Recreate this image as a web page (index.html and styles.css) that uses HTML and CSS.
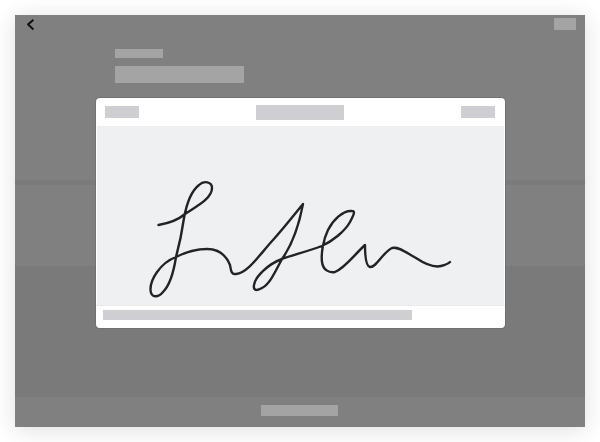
FILE: index.html
```html
<!DOCTYPE html>
<html lang="en">
<head>
<meta charset="utf-8">
<title>Signature preview</title>
<link rel="stylesheet" href="styles.css">
</head>
<body>
<main class="screen">
  <section class="top">
    <div class="nav">
      <svg class="back" width="8" height="12" viewBox="0 0 8 12"><path d="M6.4 0.8 L1.1 5.4 L6.4 10.4" fill="none" stroke="#111" stroke-width="2"/></svg>
      <span class="ph nav-action"></span>
    </div>
    <div class="heading">
      <span class="ph label"></span>
      <span class="ph title"></span>
    </div>
  </section>
  <div class="divider"></div>
  <section class="mid"></section>
  <section class="lower"></section>
  <footer class="bottom"><span class="ph bottom-action"></span></footer>

  <div class="modal">
    <div class="modal-head">
      <span class="mh side"></span>
      <span class="mh center"></span>
      <span class="mh side"></span>
    </div>
    <div class="modal-body">
      <svg class="signature" width="407" height="179" viewBox="97 126 407 179">
        <path d="M158.5 225 C170 223 178 220 185 214 C195 207 212 199 212 188 C212 182 204 180 199 185 C190 192 186 207 184 218 C182 232 179 246 176 257 C174 270 170 285 163 292 C158 298 151 298 150.5 290 C150 280 160 263 176 257 C186 252 198 249 207 249 C218 249 226 255 230 265 C231 270 231 275 236 274 C248 273 260 254 273 240 C283 229 294 215 303 204 C299 225 292 245 282 259 C275 272 270 284 262 288 C257 291 253 291 254 285 C255 277 268 264 282 259 C292 255 306 252 321.7 246 C333 241 345 231 350 222 C353 216 356 211 352 211 C343 210 333 220 328 230 C323 240 321 254 322 262 C323 270 329 273 335 272 C345 268 355 254 365 245 C365 252 365 266 370 267 C376 268 383 252 392 248 C399 246 408 254 416 258 C425 264 433 268 441 266 C445 265 448 264 450 262" fill="none" stroke="#222327" stroke-width="2.4" stroke-linecap="round" stroke-linejoin="round"/>
      </svg>
    </div>
    <div class="modal-foot"><span class="mh foot-bar"></span></div>
  </div>
</main>
</body>
</html>
```

FILE: styles.css
```css
html, body {
  margin: 0;
  padding: 0;
  background: #fff;
  overflow: hidden;
}
body {
  width: 600px;
  height: 442px;
  padding: 15px 15px 0;
  box-sizing: border-box;
}
.screen {
  position: relative;
  width: 570px;
  height: 412px;
  display: flex;
  flex-direction: column;
  background: #7a7a7b;
  box-shadow: 0 3px 22px rgba(0, 0, 0, 0.13);
}
.top {
  height: 165px;
  background: #808080;
  box-sizing: border-box;
  padding: 3px 9px 0 12px;
}
.nav {
  display: flex;
  justify-content: space-between;
  align-items: flex-start;
}
.back {
  margin-top: 1px;
  display: block;
}
.ph {
  display: block;
  background: #a4a4a4;
}
.nav-action {
  width: 22px;
  height: 12px;
}
.heading {
  display: flex;
  flex-direction: column;
  gap: 8px;
  margin: 18px 0 0 88px;
}
.label {
  width: 48px;
  height: 9px;
}
.title {
  width: 129px;
  height: 17px;
}
.divider {
  height: 5px;
  background: #7a7a7a;
}
.mid {
  height: 81px;
  background: #808080;
}
.lower {
  height: 131px;
  background: #7a7a7b;
}
.bottom {
  height: 30px;
  background: #808080;
  display: flex;
  justify-content: center;
  padding-top: 8px;
  padding-right: 1px;
  box-sizing: border-box;
}
.bottom-action {
  width: 77px;
  height: 11px;
}
.modal {
  position: absolute;
  left: 81px;
  top: 83px;
  width: 409px;
  height: 230px;
  display: flex;
  flex-direction: column;
  background: #fff;
  border-radius: 4px;
  box-shadow: 0 0 0 1px rgba(100, 100, 100, 0.45);
  overflow: hidden;
}
.modal-head {
  height: 28px;
  flex: none;
  display: flex;
  justify-content: space-between;
  align-items: center;
  padding: 0 10px 0 9px;
  box-sizing: border-box;
}
.mh {
  display: block;
  background: #cfced3;
}
.side {
  width: 34px;
  height: 12px;
}
.center {
  width: 88px;
  height: 15px;
}
.modal-body {
  height: 179px;
  flex: none;
  background: #eff0f2;
  margin: 0 1px;
}
.signature {
  display: block;
  overflow: visible;
}
.modal-foot {
  flex: 1;
  border-top: 1px solid #e9e9ec;
  padding: 4px 0 0 7px;
}
.foot-bar {
  width: 309px;
  height: 10px;
}
```
